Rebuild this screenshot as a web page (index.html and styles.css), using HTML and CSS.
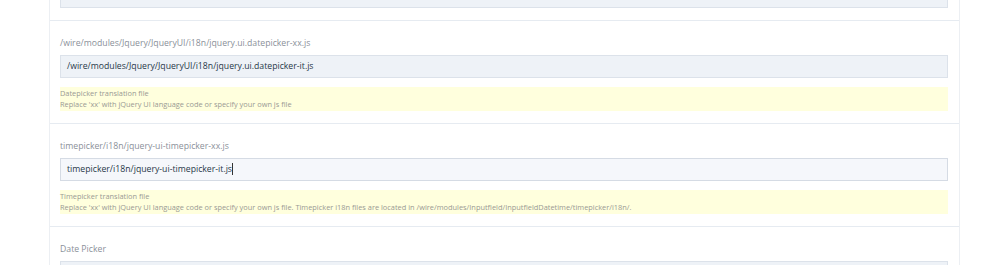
FILE: index.html
```html
<!DOCTYPE html>
<html lang="en">
<head>
  <meta charset="utf-8">
  <title>Datetime settings</title>
  <link rel="stylesheet" href="styles.css">
</head>
<body>
  <div id="panel">
    <div class="field field-first">
      <div class="input"></div>
    </div>

    <div class="field">
      <div class="label">/wire/modules/Jquery/JqueryUI/i18n/jquery.ui.datepicker-xx.js</div>
      <div class="input">/wire/modules/Jquery/JqueryUI/i18n/jquery.ui.datepicker-it.js</div>
      <div class="notes">
        <p>Datepicker translation file</p>
        <p>Replace 'xx' with jQuery UI language code or specify your own js file</p>
      </div>
    </div>

    <div class="field">
      <div class="label">timepicker/i18n/jquery-ui-timepicker-xx.js</div>
      <div class="input focus">timepicker/i18n/jquery-ui-timepicker-it.js<span class="caret"></span></div>
      <div class="notes">
        <p>Timepicker translation file</p>
        <p>Replace 'xx' with jQuery UI language code or specify your own js file. Timepicker i18n files are located in /wire/modules/Inputfield/InputfieldDatetime/timepicker/i18n/.</p>
      </div>
    </div>

    <div class="field">
      <div class="label">Date Picker</div>
      <div class="input"></div>
    </div>
  </div>
</body>
</html>
```

FILE: styles.css
```css
body {
  margin: 0;
  background: #fff;
  font-family: "Open Sans", "Noto Sans", sans-serif;
  overflow: hidden;
}
#panel {
  width: 909px;
  margin: -27px 0 0 49px;
  border-left: 1px solid #eceff3;
  border-right: 1px solid #eceff3;
}
.field {
  padding: 12px 11px 12px 10px;
  border-top: 1px solid #e6ebf1;
}
.field-first {
  border-top: 0;
}
.label {
  font-size: 8.7px;
  line-height: 20px;
  color: #8a9099;
  margin-bottom: 2px;
}
.input {
  height: 21px;
  line-height: 21px;
  padding: 0 6px;
  font-size: 8.7px;
  color: #283848;
  background: #eef2f7;
  border: 1px solid #dce2ea;
}
.input.focus {
  background: #f5f7fb;
  border-color: #d5dbe4;
}
.caret {
  display: inline-block;
  width: 1px;
  height: 12px;
  background: #333;
  vertical-align: -3px;
}
.notes {
  margin-top: 9px;
  padding: 1px 0;
  background: #ffffdd;
  color: #9a9a94;
  font-size: 7.4px;
  line-height: 11px;
}
.notes p {
  margin: 0;
}
```
